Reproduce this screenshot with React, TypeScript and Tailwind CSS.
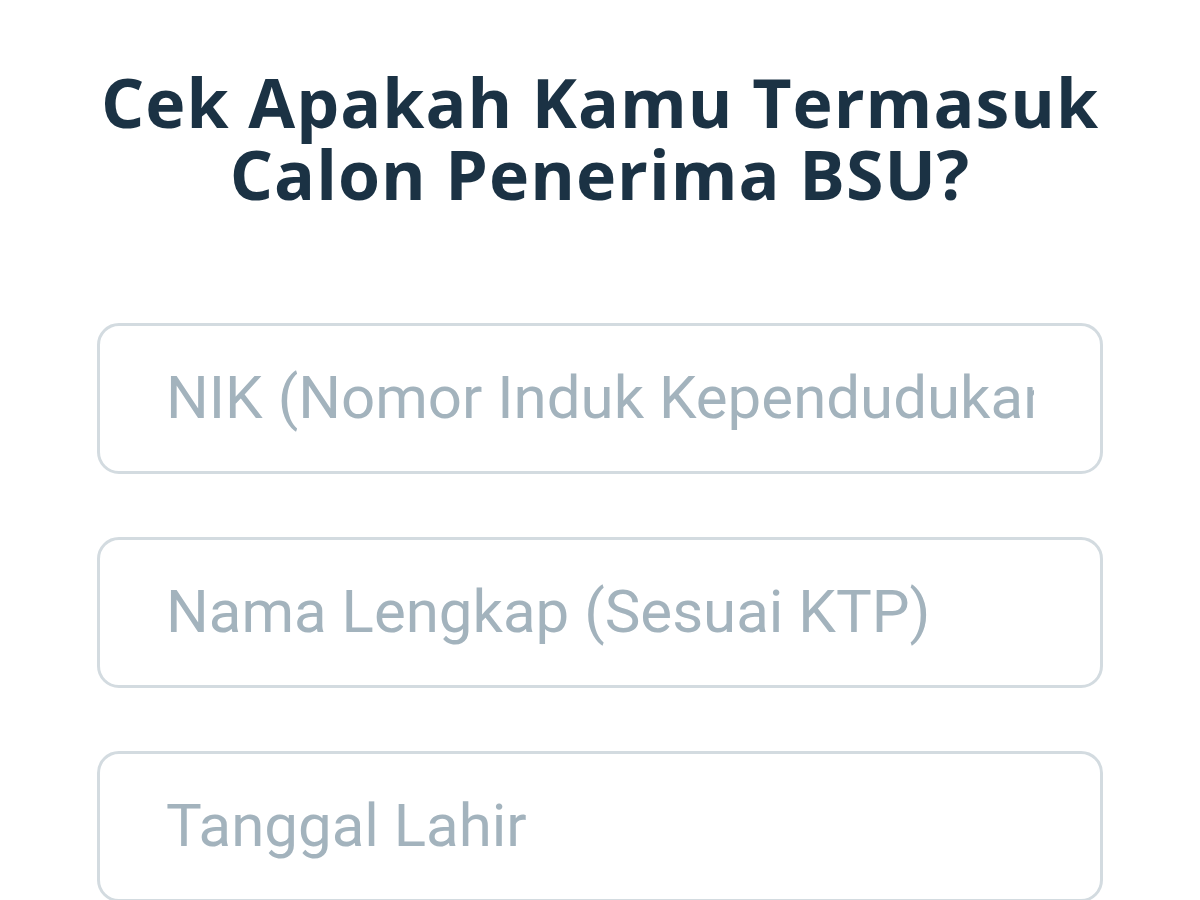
import React from "react";

const fields = [
  "NIK (Nomor Induk Kependudukan)",
  "Nama Lengkap (Sesuai KTP)",
  "Tanggal Lahir",
];

export default function App() {
  return (
    <div className="w-[1200px] h-[900px] overflow-hidden bg-white">
      <h1
        className="pt-[66px] text-center text-[68px] leading-[72px] font-bold text-[#1b3244] tracking-[1px]"
        style={{ fontFamily: '"Open Sans", "Liberation Sans", sans-serif' }}
      >
        Cek Apakah Kamu Termasuk
        <br />
        Calon Penerima BSU?
      </h1>
      <div className="mt-[113px] mx-[97px] flex flex-col gap-[63px]">
        {fields.map((f) => (
          <input
            key={f}
            type="text"
            placeholder={f}
            className="h-[151px] w-full rounded-[22px] border-[3px] border-[#d3dbe0] bg-white pl-[66px] pr-[66px] pb-[3px] text-[60px] text-[#1b3244] placeholder:text-[#a3b3bd] outline-none"
            style={{ fontFamily: 'Roboto, "Liberation Sans", sans-serif' }}
          />
        ))}
      </div>
    </div>
  );
}
